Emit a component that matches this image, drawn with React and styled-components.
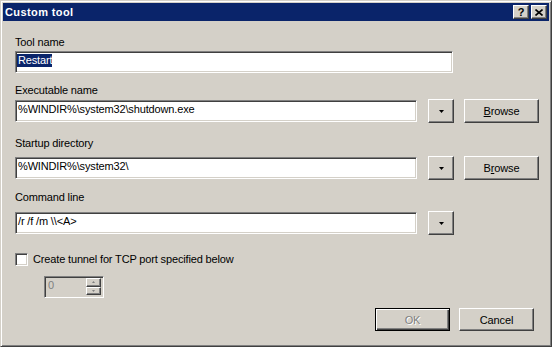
import React from 'react';
import styled, { createGlobalStyle } from 'styled-components';

const GlobalStyle = createGlobalStyle`
  html, body {
    margin: 0;
    padding: 0;
    background: #d4d0c8;
  }
  body {
    font-family: 'Liberation Sans', Arial, sans-serif;
    font-size: 11px;
    letter-spacing: -0.15px;
    color: #000;
  }
`;

const Window = styled.div`
  box-sizing: border-box;
  width: 552px;
  height: 347px;
  background: #d4d0c8;
  border: 1px solid;
  border-color: #d4d0c8 #404040 #404040 #d4d0c8;
  box-shadow: inset 1px 1px #fff, inset -1px -1px #808080;
  padding: 2px;
  display: flex;
  flex-direction: column;
`;

const TitleBar = styled.div`
  height: 18px;
  flex-shrink: 0;
  background: #0a246a;
  display: flex;
  align-items: center;
  padding: 0 2px;
  color: #fff;
  span {
    flex: 1;
    font-weight: bold;
    font-size: 11px;
    letter-spacing: 0.4px;
  }
`;

const raised = `
  box-sizing: border-box;
  background: #d4d0c8;
  border: 1px solid;
  border-color: #fff #404040 #404040 #fff;
  box-shadow: inset -1px -1px #808080;
`;

const sunken = `
  box-sizing: border-box;
  border: 1px solid;
  border-color: #808080 #fff #fff #808080;
  box-shadow: inset 1px 1px #404040, inset -1px -1px #d4d0c8;
`;

const CaptionButton = styled.div`
  ${raised}
  width: 16px;
  height: 14px;
  margin-left: 2px;
  display: flex;
  align-items: center;
  justify-content: center;
  color: #000;
  font-weight: bold;
  font-size: 11px;
  line-height: 12px;
`;

const Content = styled.div`
  display: flex;
  flex-direction: column;
  padding: 0 10px 0 12px;
`;

const Label = styled.div`
  line-height: 13px;
  margin-top: ${(p) => p.top}px;
  margin-bottom: ${(p) => p.below}px;
`;

const Row = styled.div`
  display: flex;
  align-items: center;
  height: 24px;
`;

const Edit = styled.div`
  ${sunken}
  width: ${(p) => p.width}px;
  height: 22px;
  background: #fff;
  padding: 2px 0 0 2px;
  line-height: 13px;
  white-space: nowrap;
  overflow: hidden;
  flex-shrink: 0;
`;

const Selected = styled.span`
  background: #0a246a;
  color: #fff;
  margin-left: -1px;
  padding-left: 1px;
  display: inline-block;
`;

const DropButton = styled.div`
  ${raised}
  width: 26px;
  height: 24px;
  margin-left: 11px;
  display: flex;
  align-items: center;
  justify-content: center;
  padding-top: 1px;
`;

const PushButton = styled.div`
  ${raised}
  width: 75px;
  height: ${(p) => p.height || 23}px;
  margin-left: ${(p) => p.gap || 0}px;
  display: flex;
  align-items: center;
  justify-content: center;
  u {
    text-decoration: underline;
  }
`;

const DefaultButton = styled(PushButton)`
  border: 1px solid #000;
  box-shadow: inset 1px 1px #fff, inset -1px -1px #404040, inset -2px -2px #808080;
  color: #808080;
  text-shadow: 1px 1px #fff;
`;

const CheckRow = styled.div`
  display: flex;
  align-items: center;
  height: 13px;
  margin-top: 18px;
  line-height: 13px;
`;

const CheckBox = styled.div`
  ${sunken}
  width: 13px;
  height: 13px;
  background: #fff;
  margin-right: 5px;
`;

const Spinner = styled.div`
  ${sunken}
  width: 60px;
  height: 22px;
  margin: 10px 0 0 29px;
  background: #d4d0c8;
  display: flex;
  padding: 2px 2px 2px 3px;
  color: #808080;
  line-height: 13px;
  span {
    flex: 1;
  }
`;

const SpinButtons = styled.div`
  display: flex;
  flex-direction: column;
  width: 15px;
  margin-top: -1px;
`;

const SpinButton = styled.div`
  ${raised}
  height: 9px;
  display: flex;
  align-items: center;
  justify-content: center;
`;

const ButtonBar = styled.div`
  display: flex;
  justify-content: flex-end;
  margin-top: 10px;
  padding-right: 5px;
`;

const Arrow = ({ down = true, color = '#000', w = 5 }) => (
  <svg width={w} height={(w + 1) / 2} viewBox={`0 0 ${w} ${(w + 1) / 2}`}>
    <polygon
      points={down ? `0,0 ${w},0 ${w / 2},${(w + 1) / 2}` : `0,${(w + 1) / 2} ${w},${(w + 1) / 2} ${w / 2},0`}
      fill={color}
    />
  </svg>
);

const CloseGlyph = () => (
  <svg width="8" height="7" viewBox="0 0 8 7">
    <path d="M0.5 0.5 L7.5 6.5 M7.5 0.5 L0.5 6.5" stroke="#000" strokeWidth="1.6" />
  </svg>
);

export default function App() {
  return (
    <>
      <GlobalStyle />
      <Window>
        <TitleBar>
          <span>Custom tool</span>
          <CaptionButton>?</CaptionButton>
          <CaptionButton>
            <CloseGlyph />
          </CaptionButton>
        </TitleBar>
        <Content>
          <Label top={15} below={2}>Tool name</Label>
          <Edit width={438}>
            <Selected>Restart</Selected>
          </Edit>

          <Label top={11} below={2}>Executable name</Label>
          <Row>
            <Edit width={402}>%WINDIR%\system32\shutdown.exe</Edit>
            <DropButton>
              <Arrow />
            </DropButton>
            <PushButton height={24} gap={10}>
              <span><u>B</u>rowse</span>
            </PushButton>
          </Row>

          <Label top={14} below={6}>Startup directory</Label>
          <Row>
            <Edit width={402}>%WINDIR%\system32\</Edit>
            <DropButton>
              <Arrow />
            </DropButton>
            <PushButton height={24} gap={10}>
              <span>B<u>r</u>owse</span>
            </PushButton>
          </Row>

          <Label top={11} below={7}>Command line</Label>
          <Row>
            <Edit width={402}>/r /f /m \\&lt;A&gt;</Edit>
            <DropButton>
              <Arrow />
            </DropButton>
          </Row>

          <CheckRow>
            <CheckBox />
            <span>Create tunnel for TCP port specified below</span>
          </CheckRow>

          <Spinner>
            <span>0</span>
            <SpinButtons>
              <SpinButton>
                <Arrow down={false} color="#808080" w={3} />
              </SpinButton>
              <SpinButton>
                <Arrow color="#808080" w={3} />
              </SpinButton>
            </SpinButtons>
          </Spinner>

          <ButtonBar>
            <DefaultButton>OK</DefaultButton>
            <PushButton gap={9}>Cancel</PushButton>
          </ButtonBar>
        </Content>
      </Window>
    </>
  );
}
